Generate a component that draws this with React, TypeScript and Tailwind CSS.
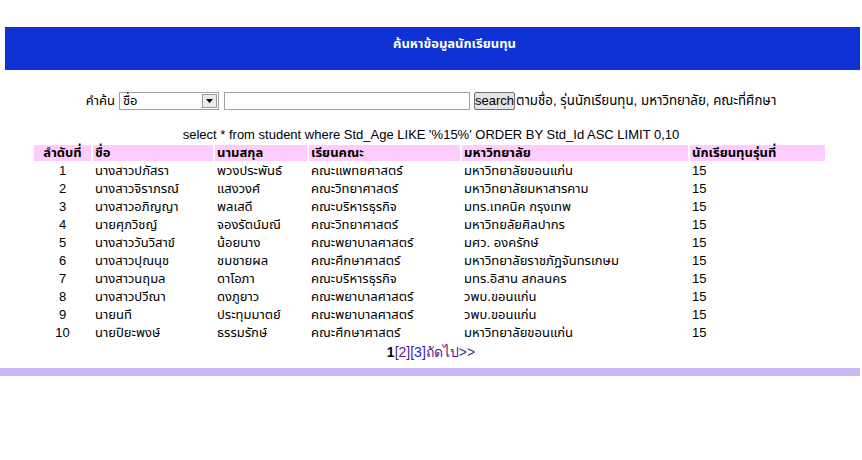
import React from "react";

const rows: [string, string, string, string, string, string][] = [
  ["1", "นางสาวปภัสรา", "พวงประพันธ์", "คณะแพทยศาสตร์", "มหาวิทยาลัยขอนแก่น", "15"],
  ["2", "นางสาวจิราภรณ์", "แสงวงศ์", "คณะวิทยาศาสตร์", "มหาวิทยาลัยมหาสารคาม", "15"],
  ["3", "นางสาวอภิญญา", "พลเสดี", "คณะบริหารธุรกิจ", "มทร.เทคนิค กรุงเทพ", "15"],
  ["4", "นายศุภวิชญ์", "จองรัตน์มณี", "คณะวิทยาศาสตร์", "มหาวิทยลัยศิลปากร", "15"],
  ["5", "นางสาววันวิสาข์", "น้อยนาง", "คณะพยาบาลศาสตร์", "มศว. องครักษ์", "15"],
  ["6", "นางสาวปุณนุช", "ชมชายผล", "คณะศึกษาศาสตร์", "มหาวิทยาลัยราชภัฎจันทรเกษม", "15"],
  ["7", "นางสาวนฤมล", "ดาโอภา", "คณะบริหารธุรกิจ", "มทร.อิสาน สกลนคร", "15"],
  ["8", "นางสาวปวีณา", "ดงภูยาว", "คณะพยาบาลศาสตร์", "วพบ.ขอนแก่น", "15"],
  ["9", "นายนที", "ประทุมมาตย์", "คณะพยาบาลศาสตร์", "วพบ.ขอนแก่น", "15"],
  ["10", "นายปิยะพงษ์", "ธรรมรักษ์", "คณะศึกษาศาสตร์", "มหาวิทยาลัยขอนแก่น", "15"],
];

const headers = ["ลำดับที่", "ชื่อ", "นามสกุล", "เรียนคณะ", "มหาวิทยาลัย", "นักเรียนทุนรุ่นที่"];

export default function App() {
  return (
    <div
      className="w-[862px] h-[460px] bg-white text-black text-[13px] leading-[16px]"
      style={{ fontFamily: 'Tahoma, "Liberation Sans", "Noto Sans Thai", "Noto Sans", sans-serif' }}
    >
      <div className="h-[27px]" />
      <div className="mx-[5px] w-[855px] h-[43px] bg-[#0f32d4] flex justify-center pt-[9px] pl-[44px]">
        <span className="text-white font-bold text-[13px] leading-[16px]">ค้นหาข้อมูลนักเรียนทุน</span>
      </div>
      <div className="h-[22px]" />
      <div className="flex justify-center items-center h-[18px] gap-0">
        <span className="mr-[4px]">คำค้น</span>
        <div className="w-[100px] h-[18px] border border-[#a0a0a0] flex items-center bg-white">
          <span className="flex-1 pl-[3px] text-[13px]">ชื่อ</span>
          <div className="w-[15px] h-[14px] mr-[1px] border border-[#9a9a9a] bg-[#ececec] flex items-center justify-center">
            <svg width="7" height="4" viewBox="0 0 7 4"><path d="M0 0h7L3.5 4z" fill="#000" /></svg>
          </div>
        </div>
        <div className="w-[246px] h-[18px] border border-[#a0a0a0] ml-[5px] bg-white" />
        <button
          className="ml-[4px] h-[18px] px-0 w-[41px] border border-[#707070] rounded-[2px] bg-[#e4e4e4] text-[13px] leading-[14px]"
          style={{ fontFamily: '"Liberation Sans", Arial, sans-serif' }}
        >
          search
        </button>
        <span className="ml-[1px] text-[13.3px]">ตามชื่อ, รุ่นนักเรียนทุน, มหาวิทยาลัย, คณะที่ศึกษา</span>
      </div>
      <div className="h-[16px]" />
      <div
        className="text-center h-[17px] text-[13px] leading-[17px]"
        style={{ fontFamily: '"Liberation Sans", Arial, sans-serif' }}
      >
        select * from student where Std_Age LIKE '%15%' ORDER BY Std_Id ASC LIMIT 0,10
      </div>
      <div className="pl-[34px] pt-[2px]">
        <div className="grid grid-cols-[57px_120px_92px_151px_226px_135px] gap-[2px] auto-rows-[16px]">
          {headers.map((h, i) => (
            <div key={h} className={`bg-[#ffccff] font-bold ${i === 0 ? "text-center" : "pl-[2px]"}`}>
              {h}
            </div>
          ))}
          {rows.map((r) =>
            r.map((c, i) => (
              <div key={r[0] + "-" + i} className={i === 0 ? "text-center" : "pl-[2px]"}>
                {c}
              </div>
            ))
          )}
        </div>
      </div>
      <div
        className="text-center mt-[3px] h-[16px] text-[14px] leading-[16px]"
        style={{ fontFamily: '"Liberation Sans", Arial, sans-serif' }}
      >
        <span className="font-bold">1</span>
        <span className="text-[#551a8b]">[2]</span>
        <span className="text-[#2a1ad0]">[3]</span>
        <span className="text-[#551a8b]">ถัดไป&gt;&gt;</span>
      </div>
      <div className="h-[8px]" />
      <div className="h-[8px] w-[860px] bg-[#c8b8f0]" />
    </div>
  );
}
